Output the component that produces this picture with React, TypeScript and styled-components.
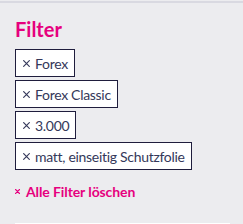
import React from "react";
import styled, { createGlobalStyle } from "styled-components";

const GlobalStyle = createGlobalStyle`
  html, body {
    margin: 0;
    padding: 0;
    background: #ececef;
    font-family: "Lato", "Liberation Sans", sans-serif;
  }
`;

const Panel = styled.aside`
  border-top: 2px solid #d9d9e1;
  margin-top: 1px;
  padding: 14px 13px 0 15px;
  display: flex;
  flex-direction: column;
`;

const Title = styled.h3`
  margin: 0 0 8px 0;
  color: #e6007e;
  font-size: 20px;
  font-weight: 700;
  line-height: 24px;
`;

const ChipList = styled.div`
  display: flex;
  flex-direction: column;
  align-items: flex-start;
  gap: 3px;
`;

const Chip = styled.button`
  display: inline-flex;
  align-items: center;
  gap: 5px;
  height: 28px;
  padding: 0 6px 0 7px;
  background: #ffffff;
  border: 1px solid #1f1d3d;
  color: #34385a;
  font-family: inherit;
  font-size: 14px;
  letter-spacing: -0.3px;
  cursor: pointer;
`;

const ClearLink = styled.a`
  display: flex;
  align-items: center;
  gap: 6px;
  margin-top: 13px;
  color: #e6007e;
  font-size: 14px;
  font-weight: 700;
  letter-spacing: -0.1px;
  text-decoration: none;
  cursor: pointer;
`;

const NextCard = styled.div`
  margin-top: 23px;
  height: 20px;
  background: #ffffff;
`;

const CrossIcon = ({ size, weight }: { size: number; weight: number }) => (
  <svg width={size} height={size} viewBox="0 0 10 10" fill="none">
    <path
      d="M1 1L9 9M9 1L1 9"
      stroke="currentColor"
      strokeWidth={weight}
      strokeLinecap="square"
    />
  </svg>
);

const filters = ["Forex", "Forex Classic", "3.000", "matt, einseitig Schutzfolie"];

export default function App() {
  return (
    <>
      <GlobalStyle />
      <Panel>
        <Title>Filter</Title>
        <ChipList>
          {filters.map((f) => (
            <Chip key={f}>
              <CrossIcon size={7} weight={1.6} />
              {f}
            </Chip>
          ))}
        </ChipList>
        <ClearLink>
          <CrossIcon size={5} weight={2.4} />
          Alle Filter löschen
        </ClearLink>
        <NextCard />
      </Panel>
    </>
  );
}
